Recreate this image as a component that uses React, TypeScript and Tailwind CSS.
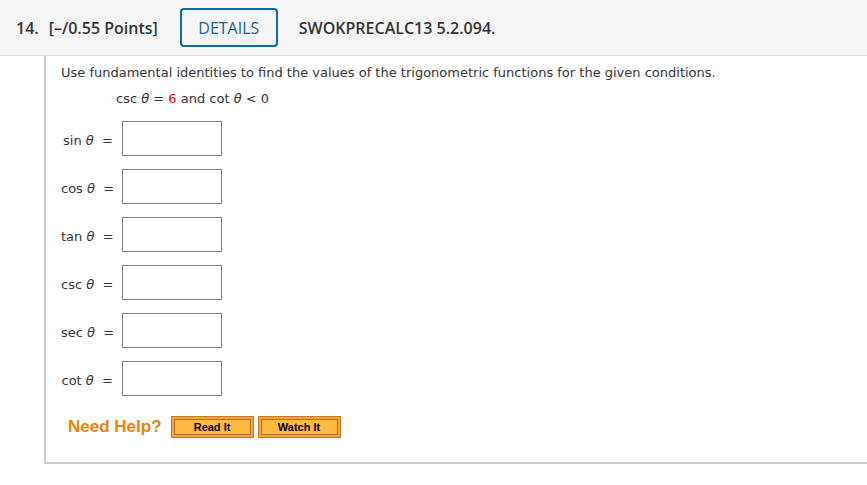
const rows = ["sin", "cos", "tan", "csc", "sec", "cot"];

function HelpButton({ label }: { label: string }) {
  return (
    <button
      type="button"
      className="h-[22px] w-[83px] border border-[#c27a2c] bg-[#f7a32f] p-[2px]"
    >
      <span className="flex h-full w-full items-center justify-center border border-[#b36f26] bg-[#fdb942] font-['Liberation_Sans',sans-serif] text-[11px] font-bold text-black">
        {label}
      </span>
    </button>
  );
}

export default function App() {
  return (
    <div className="min-h-[485px] w-[867px] bg-white text-[#333]">
      {/* Question header */}
      <div className="flex h-[56px] items-center border-b border-[#dcdcdc] bg-[#f5f5f5] pl-[16px] font-['Open_Sans',sans-serif] text-[16px] font-semibold text-[#333]">
        <span>14.</span>
        <span className="ml-[10px]">[–/0.55 Points]</span>
        <span className="ml-[22px] flex h-[39px] w-[98px] items-center justify-center rounded-[4px] border-2 border-[#1068a0] font-normal text-[#1a5c8e]">
          DETAILS
        </span>
        <span className="ml-[21px]">SWOKPRECALC13 5.2.094.</span>
      </div>

      {/* Question body */}
      <div className="ml-[44px] h-[408px] border-b-2 border-l-2 border-[#cccccc] pl-[15px] font-['DejaVu_Sans',Verdana,sans-serif] text-[13px] text-[#333]">
        <p className="pt-[9px] leading-[16px]">
          Use fundamental identities to find the values of the trigonometric functions for the given conditions.
        </p>
        <p className="mt-[10px] pl-[55px] leading-[16px]">
          csc <i>θ</i> = <span className="text-[#e00]">6</span> and cot <i>θ</i> &lt; 0
        </p>

        <div className="mt-[14px] flex flex-col gap-[13px]">
          {rows.map((fn) => (
            <div key={fn} className="flex items-center">
              <span className="w-[52px] whitespace-nowrap pt-[4px] text-right">
                {fn} <i>θ</i>&nbsp; =
              </span>
              <input
                type="text"
                className="ml-[9px] h-[35px] w-[100px] border border-[#808080] bg-white outline-none"
              />
            </div>
          ))}
        </div>

        <div className="mt-[18px] flex items-center pl-[7px]">
          <span className="font-['Liberation_Sans',sans-serif] text-[17px] font-bold text-[#e8830e]">
            Need Help?
          </span>
          <div className="ml-[9px] flex gap-[4px]">
            <HelpButton label="Read It" />
            <HelpButton label="Watch It" />
          </div>
        </div>
      </div>
    </div>
  );
}
